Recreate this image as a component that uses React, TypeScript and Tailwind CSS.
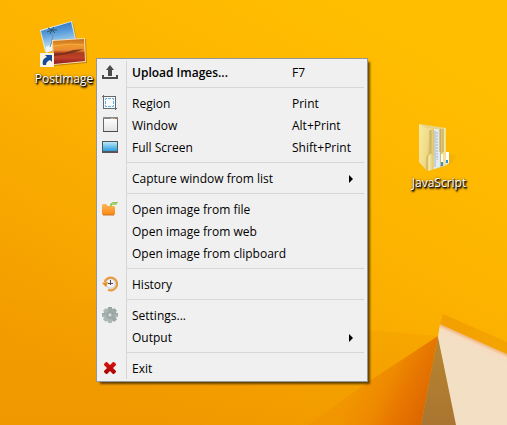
import type { ReactNode } from "react";

function Wallpaper() {
  return (
    <svg
      className="absolute inset-0 h-full w-full"
      viewBox="0 0 507 425"
      preserveAspectRatio="none"
      aria-hidden="true"
    >
      <defs>
        <linearGradient id="sky" gradientUnits="userSpaceOnUse" x1="400" y1="0" x2="160" y2="425">
          <stop offset="0" stopColor="#ffbf00" />
          <stop offset="0.4" stopColor="#fdb500" />
          <stop offset="0.75" stopColor="#f8a700" />
          <stop offset="1" stopColor="#f29c00" />
        </linearGradient>
        <linearGradient id="ground" gradientUnits="userSpaceOnUse" x1="0" y1="290" x2="0" y2="425">
          <stop offset="0" stopColor="#f39c00" stopOpacity="0.25" />
          <stop offset="1" stopColor="#ef9600" stopOpacity="0.6" />
        </linearGradient>
        <linearGradient id="fold" gradientUnits="userSpaceOnUse" x1="365" y1="370" x2="432" y2="405">
          <stop offset="0" stopColor="#f19500" />
          <stop offset="0.35" stopColor="#ee8900" />
          <stop offset="0.6" stopColor="#e87800" />
          <stop offset="1" stopColor="#dc6500" />
        </linearGradient>
        <linearGradient id="brown" x1="0" y1="0" x2="0" y2="1">
          <stop offset="0" stopColor="#b8862f" />
          <stop offset="1" stopColor="#a97531" />
        </linearGradient>
        <linearGradient id="strip" x1="0" y1="0" x2="1" y2="0.4">
          <stop offset="0" stopColor="#f29f00" />
          <stop offset="1" stopColor="#f4a400" />
        </linearGradient>
        <linearGradient id="paper" gradientUnits="userSpaceOnUse" x1="476" y1="339" x2="472" y2="348">
          <stop offset="0" stopColor="#f0a860" />
          <stop offset="0.5" stopColor="#f6dcc0" />
          <stop offset="1" stopColor="#f3dfc4" />
        </linearGradient>
      </defs>
      <rect width="507" height="425" fill="url(#sky)" />
      <path d="M0 298 L100 302 L368 330 L438 336 L430 425 H0Z" fill="url(#ground)" />
      <path d="M438 336 L368 382 L308 425 H421Z" fill="url(#fold)" />
      <path d="M438 336 L421 425 H457Z" fill="url(#brown)" />
      <path d="M443 314 L507 342 V356 L440 325Z" fill="url(#strip)" />
      <path d="M440 324 L507 354 V425 H456 L438 337Z" fill="url(#paper)" />
    </svg>
  );
}

function PhotosIcon() {
  return (
    <svg width="48" height="48" viewBox="0 0 48 48" aria-hidden="true">
      <defs>
        <linearGradient id="beach" x1="0" y1="0" x2="0.2" y2="1">
          <stop offset="0" stopColor="#2566b8" />
          <stop offset="0.45" stopColor="#5b9fdc" />
          <stop offset="1" stopColor="#d8edf8" />
        </linearGradient>
        <linearGradient id="sunset" x1="0" y1="0" x2="0" y2="1">
          <stop offset="0" stopColor="#c4701f" />
          <stop offset="0.28" stopColor="#ef962c" />
          <stop offset="0.45" stopColor="#ea8a35" />
          <stop offset="0.56" stopColor="#a83c1e" />
          <stop offset="0.75" stopColor="#c0402a" />
          <stop offset="1" stopColor="#8c1a20" />
        </linearGradient>
      </defs>
      <path d="M1 11 L33 2 L38 25 L6 33Z" fill="#7a4a00" opacity="0.35" />
      <path d="M0 10 L32 1 L37 24 L5 32Z" fill="#dbe9f2" />
      <path d="M1 11 L31 2 L36 23 L6 31Z" fill="url(#beach)" />
      <path d="M6 27 L12 24 V31 L6 33Z" fill="#f0f3ee" />
      <path d="M12 10 Q14 17 10 27" fill="none" stroke="#6f93ab" strokeWidth="1" />
      <path d="M12 10 L7 12 M12 10 L8 8 M12 10 L14 7 M12 10 L17 10 M12 10 L15 13 M12 10 L10 14" stroke="#2f5468" strokeWidth="1" fill="none" />
      <path d="M13 21 L46 19 L47 43 L14 46Z" fill="#6d3d00" opacity="0.4" />
      <path d="M12 20 L45 18 L46 42 L13 45Z" fill="#f5dcae" />
      <path d="M13 21 L44 19 L45 41 L14 44Z" fill="url(#sunset)" />
      <path d="M13 34 L24 33 L33 30 L44 29 L36 32 L27 34 L14 36Z" fill="#6b2a18" opacity="0.8" />
      <path d="M14 26 L30 24 L44 25" stroke="#f8c04a" strokeWidth="1" fill="none" opacity="0.7" />
      <rect x="0" y="33" width="14" height="14" fill="#fbf4e2" />
      <path d="M3 45 C2 40 4 38 7 37 L5 35 H12 V42 L10 40 C7 41 6 43 6 45Z" fill="#164a96" />
    </svg>
  );
}

function FolderIcon() {
  return (
    <svg width="48" height="48" viewBox="0 0 48 48" aria-hidden="true">
      <defs>
        <linearGradient id="cover" x1="0" y1="0" x2="1" y2="0.6">
          <stop offset="0" stopColor="#f8e9a4" />
          <stop offset="0.7" stopColor="#f0dc8a" />
          <stop offset="1" stopColor="#e3c869" />
        </linearGradient>
        <linearGradient id="leaf" x1="0" y1="0" x2="1" y2="0">
          <stop offset="0" stopColor="#d0b665" />
          <stop offset="0.5" stopColor="#f5e6a0" />
          <stop offset="1" stopColor="#dcc267" />
        </linearGradient>
        <linearGradient id="cast" x1="0" y1="0" x2="1" y2="0">
          <stop offset="0" stopColor="#b58a20" stopOpacity="0.4" />
          <stop offset="1" stopColor="#b58a20" stopOpacity="0" />
        </linearGradient>
      </defs>
      <path d="M28 30 L44 31 L36 39 L26 44Z" fill="url(#cast)" />
      <path d="M5 0 L31 4 V28 L33 29 V40 L24 44 L16 46Z" fill="#e8d382" />
      <path d="M19 5 L25 5 V43 L19 45Z" fill="#e4eaee" />
      <path d="M20 7 V43" stroke="#a5b4c0" strokeWidth="1" />
      <path d="M22 8 V36" stroke="#9fb4c8" strokeWidth="1" strokeDasharray="2 1" />
      <path d="M25 5 L31 4 V27 L34 30 V40 L25 44Z" fill="url(#leaf)" />
      <path d="M25 5 V28 M28 5 V28" stroke="#bfa24a" strokeWidth="1" />
      <path d="M26 30 H28 V42 H26Z M31 28 H34 V39 L31 40Z" fill="#ffffff" />
      <path d="M27 38 V42 M32 36 V39" stroke="#2d93d8" strokeWidth="2" />
      <path d="M12 4 L19 5 V30 L18 33 V45 L14 47 L10 45Z" fill="url(#leaf)" />
      <path d="M16 6 V30" stroke="#c4a852" strokeWidth="1" />
      <path d="M4 0 L15 6 V29 L12 33 V47 L4 38Z" fill="url(#cover)" />
      <path d="M15 6 V29 L12 33 V46" fill="none" stroke="#c9ad55" strokeWidth="1" />
    </svg>
  );
}

function IconBox({ children }: { children: ReactNode }) {
  return (
    <svg width="16" height="16" viewBox="0 0 16 16" aria-hidden="true">
      {children}
    </svg>
  );
}

const uploadIcon = (
  <IconBox>
    <path d="M8 1 L12 6 H10 V12 H6 V6 H4Z" fill="#4b4b4d" />
    <path d="M0 11 H2 V13 H14 V11 H16 V15 H0Z" fill="#4b4b4d" />
  </IconBox>
);

const regionIcon = (
  <IconBox>
    <rect x="1" y="1" width="13" height="13" fill="#fbfbfb" />
    <path d="M0 1.5 H14 M1.5 0 V14 M13.5 1 V15 M1 13.5 H15" stroke="#67676b" fill="none" />
    <path
      d="M3.5 5V3.5H5 M6 3.5H9 M10 3.5H11.5V5 M11.5 6V9 M11.5 10V11.5H10 M9 11.5H6 M5 11.5H3.5V10 M3.5 9V6"
      stroke="#58b4f0"
      fill="none"
    />
  </IconBox>
);

const windowIcon = (
  <IconBox>
    <defs>
      <linearGradient id="pane" x1="0" y1="0" x2="0" y2="1">
        <stop offset="0" stopColor="#ffffff" />
        <stop offset="1" stopColor="#e2e2e4" />
      </linearGradient>
    </defs>
    <rect x="1.5" y="1.5" width="14" height="13" fill="url(#pane)" stroke="#68686b" />
    <rect x="1" y="0" width="15" height="2" fill="#88888c" />
    <rect x="9" y="1" width="2" height="1" fill="#f0c070" />
    <rect x="12" y="1" width="1" height="1" fill="#f0a040" />
    <rect x="14" y="1" width="1" height="1" fill="#e04040" />
    <path d="M1 14.5 H16" stroke="#4c4c50" />
  </IconBox>
);

const screenIcon = (
  <IconBox>
    <defs>
      <linearGradient id="glass" x1="0" y1="0" x2="0" y2="1">
        <stop offset="0" stopColor="#b8e8fb" />
        <stop offset="1" stopColor="#2b9cdc" />
      </linearGradient>
    </defs>
    <rect x="0" y="2" width="16" height="12" fill="#55565a" />
    <rect x="1" y="3" width="14" height="9" fill="url(#glass)" />
    <rect x="14" y="13" width="1" height="1" fill="#e01020" />
  </IconBox>
);

const openIcon = (
  <IconBox>
    <defs>
      <linearGradient id="orange" x1="0" y1="0" x2="0" y2="1">
        <stop offset="0" stopColor="#ffb759" />
        <stop offset="1" stopColor="#f98712" />
      </linearGradient>
    </defs>
    <path d="M1 3 H4 L6 5 H12 L13 6 V13 L12 14 H1 L0 13 V4Z" fill="url(#orange)" />
    <path d="M1 14 H12" stroke="#cf7423" />
    <path d="M8 5 C8 2 10 1 13 1 H16 L14 4 H10 L9 6Z" fill="#8bc34d" />
    <path d="M10 3 H14" stroke="#bfe080" />
  </IconBox>
);

const historyIcon = (
  <IconBox>
    <circle cx="8.5" cy="7.5" r="6" fill="#f2f2f4" />
    <circle cx="8.5" cy="7.5" r="4.8" fill="none" stroke="#b9b9bd" strokeWidth="0.8" />
    <path d="M2.6 6 A6.4 6.4 0 1 1 6 13.8" fill="none" stroke="#e69c3c" strokeWidth="2.2" />
    <path d="M0 7 L6 6 L4 11Z" fill="#e88b22" />
    <path d="M8.5 4 V9 M6 7.5 H11" stroke="#4c4c50" fill="none" />
  </IconBox>
);

const gearIcon = (
  <IconBox>
    <defs>
      <linearGradient id="steel" x1="0" y1="0" x2="0" y2="1">
        <stop offset="0" stopColor="#99a5a4" />
        <stop offset="1" stopColor="#aebbb9" />
      </linearGradient>
    </defs>
    <g fill="url(#steel)">
      <circle cx="8" cy="8" r="6.8" />
      <rect x="6" y="0" width="4" height="16" />
      <rect x="6" y="0" width="4" height="16" transform="rotate(45 8 8)" />
      <path d="M0 6 H16 V10 H0Z" />
      <rect x="6" y="0" width="4" height="16" transform="rotate(135 8 8)" />
    </g>
    <circle cx="8" cy="8" r="3.2" fill="#aab6b4" stroke="#8f9b99" strokeWidth="0.8" />
    <circle cx="8" cy="8" r="1.1" fill="#e6eae9" />
  </IconBox>
);

const exitIcon = (
  <IconBox>
    <defs>
      <linearGradient id="red" x1="0" y1="0" x2="0" y2="1">
        <stop offset="0" stopColor="#dc1414" />
        <stop offset="1" stopColor="#a80000" />
      </linearGradient>
    </defs>
    <path d="M4 2 H5 L8 5 L11 2 H12 L14 4 V5 L11 8 L14 11 V12 L12 14 H11 L8 11 L5 14 H4 L2 12 V11 L5 8 L2 5 V4Z" fill="url(#red)" />
  </IconBox>
);

type Entry = {
  label: string;
  icon?: ReactNode;
  shortcut?: string;
  submenu?: boolean;
  bold?: boolean;
};

const groups: Entry[][] = [
  [{ label: "Upload Images...", icon: uploadIcon, shortcut: "F7", bold: true }],
  [
    { label: "Region", icon: regionIcon, shortcut: "Print" },
    { label: "Window", icon: windowIcon, shortcut: "Alt+Print" },
    { label: "Full Screen", icon: screenIcon, shortcut: "Shift+Print" },
  ],
  [{ label: "Capture window from list", submenu: true }],
  [
    { label: "Open image from file", icon: openIcon },
    { label: "Open image from web" },
    { label: "Open image from clipboard" },
  ],
  [{ label: "History", icon: historyIcon }],
  [{ label: "Settings...", icon: gearIcon }, { label: "Output", submenu: true }],
  [{ label: "Exit", icon: exitIcon }],
];

function MenuRow({ entry }: { entry: Entry }) {
  return (
    <button
      type="button"
      role="menuitem"
      aria-haspopup={entry.submenu ? "menu" : undefined}
      className="flex h-[22px] w-full text-left"
    >
      <span className="flex w-[29px] shrink-0 items-center pl-[5px]">{entry.icon}</span>
      <span className="flex flex-1 items-center border-l border-[#d7d7d7] pt-px pr-[14px] pl-[5px] whitespace-nowrap">
        <span className={entry.bold ? "w-40 font-semibold" : "w-40"}>{entry.label}</span>
        {entry.shortcut && <span>{entry.shortcut}</span>}
        {entry.submenu && (
          <svg className="ml-auto" width="4" height="8" viewBox="0 0 4 8" aria-hidden="true">
            <path d="M0 0 L4 4 L0 8Z" fill="#000" />
          </svg>
        )}
      </span>
    </button>
  );
}

function ContextMenu() {
  return (
    <div
      role="menu"
      className="absolute top-[58px] left-[96px] w-[272px] border border-[#979797] bg-[#f0f0f0] py-[2px] text-[12px] leading-[17px] text-black shadow-[3px_3px_2px_-1px_rgba(0,0,0,0.6)]"
    >
      {groups.map((group, index) => (
        <div key={group[0].label} role="group">
          {index > 0 && (
            <div role="separator" className="mr-[3px] ml-[29px] flex h-[9px] items-center border-l border-[#d7d7d7]">
              <div className="h-px w-full bg-[#d7d7d7]" />
            </div>
          )}
          {group.map((entry) => (
            <MenuRow key={entry.label} entry={entry} />
          ))}
        </div>
      ))}
    </div>
  );
}

const shortcutClass =
  "absolute flex w-[76px] flex-col items-center gap-[3px] text-[12px] leading-4 text-white [text-shadow:1px_1px_1px_#000,1px_2px_2px_#000,0px_0px_2px_rgba(0,0,0,0.6)]";

export default function App() {
  return (
    <main className="relative min-h-screen overflow-hidden bg-[#fbb000] font-['Open_Sans','Noto_Sans',sans-serif]">
      <Wallpaper />
      <button type="button" className={`${shortcutClass} top-[20px] left-[26px]`}>
        <PhotosIcon />
        <span>Postimage</span>
      </button>
      <button type="button" className={`${shortcutClass} top-[124px] left-[401px]`}>
        <FolderIcon />
        <span>JavaScript</span>
      </button>
      <ContextMenu />
    </main>
  );
}
